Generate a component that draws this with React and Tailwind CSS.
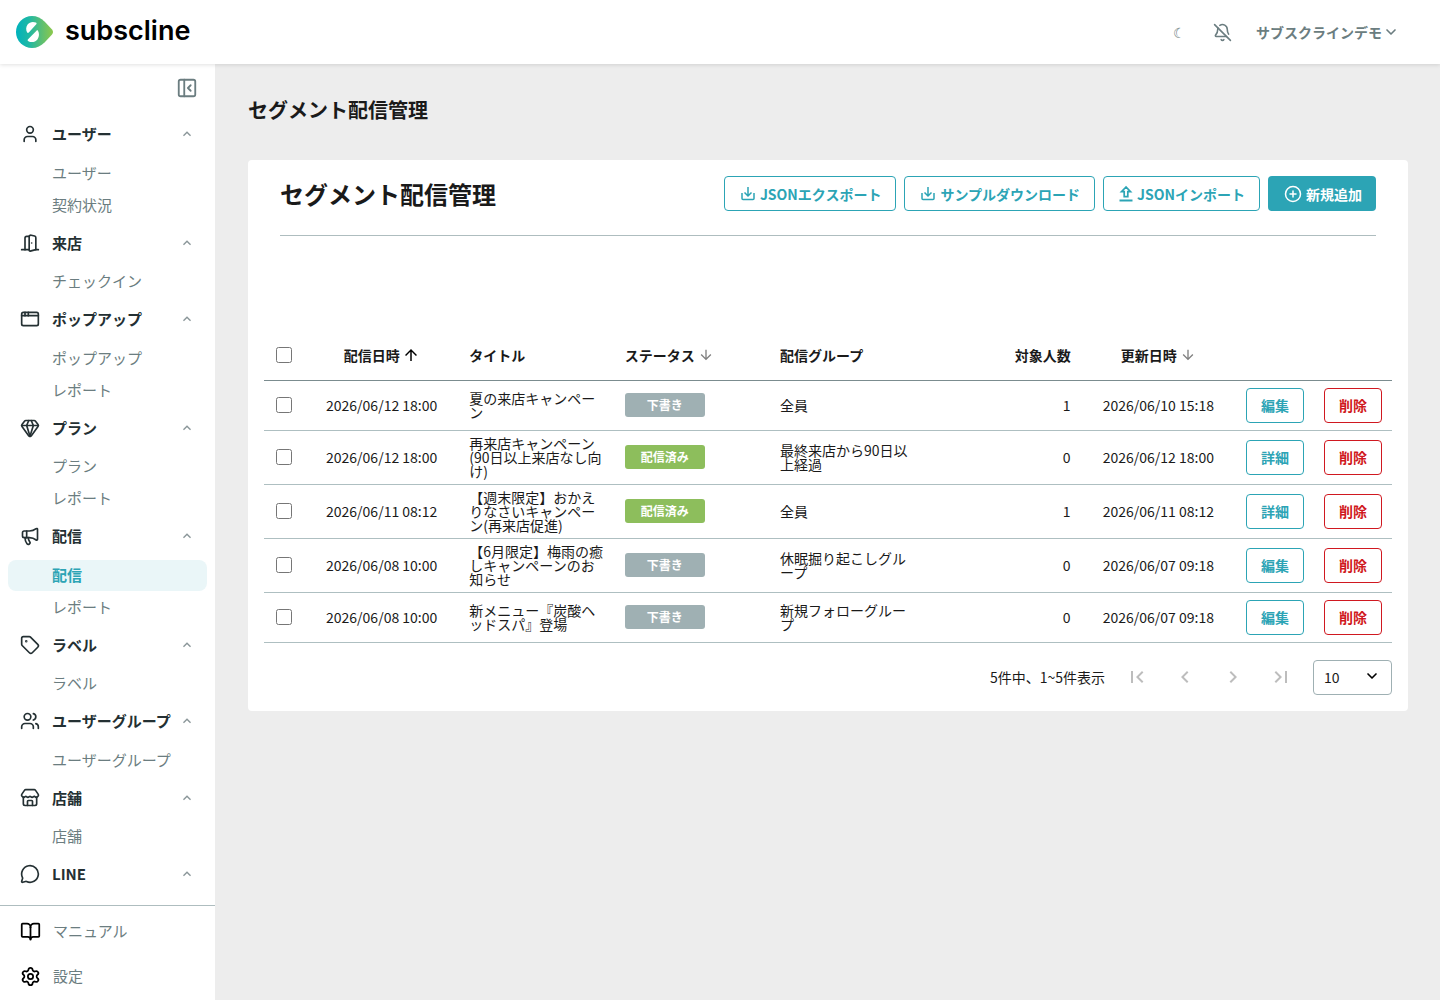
import React, { useState } from "react";
import {
  AppWindow,
  BellOff,
  BookOpen,
  ChevronDown,
  CirclePlus,
  DoorOpen,
  Gem,
  Megaphone,
  MessageCircle,
  PanelLeftClose,
  Settings,
  Store,
  Tag,
  User,
  Users,
} from "lucide-react";
import {
  MdArrowDownward,
  MdArrowUpward,
  MdChevronLeft,
  MdChevronRight,
  MdExpandLess,
  MdFirstPage,
  MdLastPage,
} from "react-icons/md";

const menuGroups = [
  { title: "ユーザー", icon: User, items: ["ユーザー", "契約状況"] },
  { title: "来店", icon: DoorOpen, items: ["チェックイン"] },
  { title: "ポップアップ", icon: AppWindow, items: ["ポップアップ", "レポート"] },
  { title: "プラン", icon: Gem, items: ["プラン", "レポート"] },
  { title: "配信", icon: Megaphone, items: ["配信", "レポート"] },
  { title: "ラベル", icon: Tag, items: ["ラベル"] },
  { title: "ユーザーグループ", icon: Users, items: ["ユーザーグループ"] },
  { title: "店舗", icon: Store, items: ["店舗"] },
  { title: "LINE", icon: MessageCircle, items: [] },
];

const deliveries = [
  {
    id: 1,
    sendAt: "2026/06/12 18:00",
    title: "夏の来店キャンペーン",
    sent: false,
    group: "全員",
    count: 1,
    updatedAt: "2026/06/10 15:18",
    action: "編集",
  },
  {
    id: 2,
    sendAt: "2026/06/12 18:00",
    title: "再来店キャンペーン(90日以上来店なし向け)",
    sent: true,
    group: "最終来店から90日以上経過",
    count: 0,
    updatedAt: "2026/06/12 18:00",
    action: "詳細",
  },
  {
    id: 3,
    sendAt: "2026/06/11 08:12",
    title: "【週末限定】おかえりなさいキャンペーン(再来店促進)",
    sent: true,
    group: "全員",
    count: 1,
    updatedAt: "2026/06/11 08:12",
    action: "詳細",
  },
  {
    id: 4,
    sendAt: "2026/06/08 10:00",
    title: "【6月限定】梅雨の癒しキャンペーンのお知らせ",
    sent: false,
    group: "休眠掘り起こしグループ",
    count: 0,
    updatedAt: "2026/06/07 09:18",
    action: "編集",
  },
  {
    id: 5,
    sendAt: "2026/06/08 10:00",
    title: "新メニュー『炭酸ヘッドスパ』登場",
    sent: false,
    group: "新規フォローグループ",
    count: 0,
    updatedAt: "2026/06/07 09:18",
    action: "編集",
  },
];

const Logo = () => (
  <a href="#" className="flex items-center gap-3 text-black">
    <svg width="37" height="32" viewBox="0 0 37 32" aria-hidden="true">
      <defs>
        <linearGradient id="logo" x1="0" y1="0" x2="1" y2="0">
          <stop offset="0" stopColor="#00b2bd" />
          <stop offset="0.35" stopColor="#1fb8a4" />
          <stop offset="0.7" stopColor="#5dbf72" />
          <stop offset="1" stopColor="#8cc84b" />
        </linearGradient>
      </defs>
      <path
        d="M16 0C21 0 25 2 28.5 5.5L36 13.5Q38 16 36 18.5L28.5 26.5C25 30 21 32 16 32A16 16 0 0 1 16 0Z"
        fill="url(#logo)"
      />
      <path
        d="M19.8 6.6C17 5.2 13.5 6 11.6 8.6C9.8 11 9.8 14.500 11.200 16.500C11.700 17.200 12.300 17 12.800 16.500L20.300 8.300C20.900 7.600 20.600 7 19.800 6.600Z"
        fill="#fff"
      />
      <path
        d="M12.4 25.200C15.500 27 19.500 26 21.600 23.200C23.400 20.600 23.400 17.200 22 14.800C21.600 14.200 21 14.200 20.500 14.700L12.100 23.300C11.300 24.200 11.500 24.700 12.400 25.200Z"
        fill="#fff"
      />
    </svg>
    <span className="pb-0.5 font-[Inter,sans-serif] text-[27px] leading-8 font-semibold">
      subscline
    </span>
  </a>
);

const DownloadIcon = () => (
  <svg width="18" height="18" viewBox="0 0 18 18" fill="none" stroke="currentColor" strokeWidth="1.5" aria-hidden="true">
    <path d="M3 8v5.500a1 1 0 0 0 1 1h10a1 1 0 0 0 1-1V8" />
    <path d="M9 2v8.500M5.500 7.500L9 11l3.500-3.500" />
  </svg>
);

const UploadIcon = () => (
  <svg width="16" height="18" viewBox="0 0 16 18" fill="none" stroke="currentColor" aria-hidden="true">
    <path d="M8 2L3.500 6.700h2.700v5h3.600v-5h2.700z" strokeWidth="1.700" />
    <path d="M1.500 15.500h13" strokeWidth="2" />
  </svg>
);

const OutlineButton = ({ icon, children }) => (
  <button className="flex h-[35px] items-center gap-[3px] rounded border border-[#2ca4b5] bg-white px-3.5 text-sm font-bold text-[#2ca4b5]">
    {icon}
    {children}
  </button>
);

const Sidebar = () => (
  <aside className="flex w-[215px] shrink-0 flex-col bg-white">
    <div className="flex justify-end px-[17px] pt-[13px] pb-4">
      <button aria-label="メニューを閉じる" className="text-[#6b7d80]">
        <PanelLeftClose size={22} strokeWidth={2} />
      </button>
    </div>
    <nav className="min-h-0 flex-1 overflow-hidden px-2 text-[15px] leading-normal">
      {menuGroups.map((group) => (
        <div key={group.title}>
          <button className="flex w-full items-center py-2 pr-3 pl-3 font-bold text-[#243033]">
            <group.icon size={20} strokeWidth={2} />
            <span className="ml-3">{group.title}</span>
            <MdExpandLess size={16} className="ml-auto text-[#8a9699]" />
          </button>
          <ul className="mt-1 mb-[3px] flex flex-col gap-px">
            {group.items.map((item) => {
              const active = group.title === "配信" && item === "配信";
              return (
                <li key={item}>
                  <a
                    href="#"
                    className={`flex h-[31px] items-center rounded-lg pl-11 ${
                      active
                        ? "bg-[#eaf6f8] font-bold text-[#2ca4b5]"
                        : "text-[#6b7d80]"
                    }`}
                  >
                    {item}
                  </a>
                </li>
              );
            })}
          </ul>
        </div>
      ))}
    </nav>
    <div className="border-t border-[#aebdbf] pt-[3px] pb-px text-[15px] text-[#6b7d80]">
      <a href="#" className="flex h-[45px] items-center gap-3 pl-5">
        <BookOpen size={21} className="text-black" />
        マニュアル
      </a>
      <a href="#" className="flex h-[45px] items-center gap-3 pl-5">
        <Settings size={21} className="text-black" />
        設定
      </a>
    </div>
  </aside>
);

const DeliveryTable = () => {
  const [selected, setSelected] = useState([]);

  const toggleAll = () => {
    setSelected(
      selected.length === deliveries.length ? [] : deliveries.map((d) => d.id)
    );
  };

  const toggle = (id) => {
    setSelected(
      selected.includes(id)
        ? selected.filter((s) => s !== id)
        : [...selected, id]
    );
  };

  return (
    <table className="w-full table-fixed border-collapse text-sm leading-[14px] text-[#1a1a1a]">
      <colgroup>
        <col className="w-10" />
        <col />
        <col />
        <col />
        <col />
        <col />
        <col />
        <col className="w-[78px]" />
        <col className="w-[78px]" />
      </colgroup>
      <thead>
        <tr className="h-[49px] border-b border-[#7b8c8f] text-left">
          <th>
            <input
              type="checkbox"
              aria-label="すべて選択"
              className="mx-auto block size-4"
              checked={selected.length === deliveries.length}
              onChange={toggleAll}
            />
          </th>
          <th className="px-2.5">
            <button className="mx-auto flex items-center gap-0.5">
              配信日時
              <MdArrowUpward size={18} className="text-black" />
            </button>
          </th>
          <th className="px-2.5">タイトル</th>
          <th className="px-2.5">
            <button className="flex items-center gap-[3px]">
              ステータス
              <MdArrowDownward size={16} className="text-[#808080]" />
            </button>
          </th>
          <th className="px-2.5">配信グループ</th>
          <th className="px-2.5 text-right">対象人数</th>
          <th className="px-2.5">
            <button className="mx-auto flex items-center gap-[3px]">
              更新日時
              <MdArrowDownward size={16} className="text-[#808080]" />
            </button>
          </th>
          <th></th>
          <th></th>
        </tr>
      </thead>
      <tbody>
        {deliveries.map((d) => (
          <tr key={d.id} className="h-[50px] border-b border-[#aebfc1]">
            <td>
              <input
                type="checkbox"
                aria-label={d.title}
                className="mx-auto block size-4"
                checked={selected.includes(d.id)}
                onChange={() => toggle(d.id)}
              />
            </td>
            <td className="px-2.5 text-center">{d.sendAt}</td>
            <td className="px-2.5 pt-[5px] pb-1.5">{d.title}</td>
            <td className="px-2.5">
              <span
                className={`flex h-6 w-20 items-center justify-center rounded-[3px] text-xs font-bold text-white ${
                  d.sent ? "bg-[#8dbe5c]" : "bg-[#9fb0b3]"
                }`}
              >
                {d.sent ? "配信済み" : "下書き"}
              </span>
            </td>
            <td className="px-2.5">{d.group}</td>
            <td className="px-2.5 text-right">{d.count}</td>
            <td className="px-2.5 text-center">{d.updatedAt}</td>
            <td className="pl-2.5">
              <button className="h-[35px] rounded border border-[#2ca4b5] px-3.5 font-bold text-[#2ca4b5]">
                {d.action}
              </button>
            </td>
            <td className="pl-2.5">
              <button className="h-[35px] rounded border border-[#d01820] px-3.5 font-bold text-[#d01820]">
                削除
              </button>
            </td>
          </tr>
        ))}
      </tbody>
    </table>
  );
};

const pageButtonClass = "flex w-12 items-center justify-center text-[#bdbdbd]";

const Pagination = () => {
  const [pageSize, setPageSize] = useState("10");

  return (
    <div className="flex items-center justify-end pt-[17px] text-sm text-[#1a1a1a]">
      <span className="mr-2">5件中、1~5件表示</span>
      <button aria-label="最初のページ" className={pageButtonClass} disabled>
        <MdFirstPage size={24} />
      </button>
      <button aria-label="前のページ" className={pageButtonClass} disabled>
        <MdChevronLeft size={24} />
      </button>
      <button aria-label="次のページ" className={pageButtonClass} disabled>
        <MdChevronRight size={24} />
      </button>
      <button aria-label="最後のページ" className={pageButtonClass} disabled>
        <MdLastPage size={24} />
      </button>
      <div className="relative ml-2">
        <select
          aria-label="表示件数"
          value={pageSize}
          onChange={(e) => setPageSize(e.target.value)}
          className="block h-[35px] w-[79px] appearance-none rounded border border-[#9fb0b3] bg-white pl-2.5"
        >
          <option>10</option>
          <option>20</option>
          <option>50</option>
        </select>
        <ChevronDown
          size={16}
          strokeWidth={2.5}
          className="pointer-events-none absolute top-2 right-3 text-black"
        />
      </div>
    </div>
  );
};

const App = () => {
  return (
    <div className="flex h-screen flex-col bg-[#ededed] font-['Noto_Sans_CJK_JP',sans-serif]">
      <header className="z-10 flex h-16 shrink-0 items-center justify-between bg-white pr-[41px] pl-4 text-[#6b7d80] shadow-[0_1px_4px_rgba(0,0,0,0.12)]">
        <Logo />
        <div className="flex items-center">
          <button aria-label="テーマ切替" className="w-[42px] text-sm">
            ☾
          </button>
          <button aria-label="通知" className="flex w-11 justify-center">
            <BellOff size={19} strokeWidth={2} />
          </button>
          <button className="ml-3 flex items-center gap-px text-sm font-bold">
            サブスクラインデモ
            <ChevronDown size={16} strokeWidth={2.5} />
          </button>
        </div>
      </header>

      <div className="flex min-h-0 flex-1">
        <Sidebar />
        <main className="min-w-0 flex-1 overflow-auto py-8 pr-8 pl-[33px]">
          <h1 className="text-xl font-bold text-[#1a1a1a]">
            セグメント配信管理
          </h1>

          <section className="mt-9 rounded bg-white p-4">
            <div className="mx-4 flex items-start justify-between border-b border-[#aebdbf] pb-6">
              <h2 className="text-2xl leading-[35px] font-bold text-[#1a1a1a]">
                セグメント配信管理
              </h2>
              <div className="flex gap-2">
                <OutlineButton icon={<DownloadIcon />}>
                  JSONエクスポート
                </OutlineButton>
                <OutlineButton icon={<DownloadIcon />}>
                  サンプルダウンロード
                </OutlineButton>
                <OutlineButton icon={<UploadIcon />}>
                  JSONインポート
                </OutlineButton>
                <button className="flex h-[35px] items-center gap-1 rounded bg-[#2ca4b5] pr-3.5 pl-4 text-sm font-bold text-white">
                  <CirclePlus size={18} strokeWidth={2} />
                  新規追加
                </button>
              </div>
            </div>

            <div className="mt-[95px]">
              <DeliveryTable />
            </div>
            <Pagination />
          </section>
        </main>
      </div>
    </div>
  );
};

export default App;
